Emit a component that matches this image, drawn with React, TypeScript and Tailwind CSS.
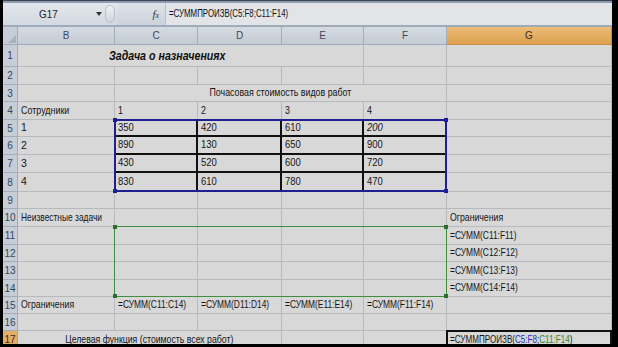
import React from 'react';

const COLS = ['B', 'C', 'D', 'E', 'F', 'G'];

// sheet rows 1..17
const DATA: Record<number, string[]> = {
  5: ['350', '420', '610', '200'],
  6: ['890', '130', '650', '900'],
  7: ['430', '520', '600', '720'],
  8: ['830', '610', '780', '470'],
};

const GRID =
  'grid grid-cols-[15px_97px_83px_84px_82px_83px_165px] grid-rows-[18px_22px_18px_17px_18px_17px_18px_18px_19px_17px_18px_18px_17px_18px_17px_17px_17px_18px]';

// Calibri is much narrower than Arial, so the text is squeezed horizontally
const T = ({
  s = 'scale-x-[0.85]',
  o = 'origin-left',
  className = '',
  children,
}: {
  s?: string;
  o?: string;
  className?: string;
  children: React.ReactNode;
}) => <span className={`inline-block whitespace-nowrap ${o} ${s} ${className}`}>{children}</span>;

const textAt = (r: number, c: number): React.ReactNode => {
  // c: 1 = B ... 6 = G
  if (r === 4) {
    const v = ['Сотрудники', '1', '2', '3', '4', ''][c - 1];
    return v ? <T>{v}</T> : '';
  }
  if (DATA[r]) {
    if (c === 1) return String(r - 4);
    if (c >= 2 && c <= 5) {
      const v = DATA[r][c - 2];
      return (
        <T s="scale-x-[0.9]" className={r === 5 && c === 5 ? 'italic' : ''}>
          {v}
        </T>
      );
    }
  }
  if (r === 10 && c === 1) return <T s="scale-x-[0.8]">Неизвестные задачи</T>;
  if (r === 10 && c === 6) return <T s="scale-x-[0.83]">Ограничения</T>;
  if (r >= 11 && r <= 14 && c === 6) return <T s="scale-x-[0.8]">{`=СУММ(C${r}:F${r})`}</T>;
  if (r === 15) {
    if (c === 1) return <T s="scale-x-[0.83]">Ограничения</T>;
    if (c >= 2 && c <= 5) {
      const l = COLS[c - 1];
      return <T s="scale-x-[0.8]">{`=СУММ(${l}11:${l}14)`}</T>;
    }
  }
  if (r === 17 && c === 6)
    return (
      <T s="scale-x-[0.77]">
        =СУММПРОИЗВ(<span className="text-[#2a2ac4]">C5:F8</span>;<span className="text-[#2f8a2f]">C11:F14</span>)
      </T>
    );
  return '';
};

const Handle = ({ pos, color }: { pos: string; color: string }) => (
  <span className={`absolute w-[4px] h-[4px] ${pos} ${color}`} />
);

export default function App() {
  const rows = Array.from({ length: 17 }, (_, i) => i + 1);

  const renderRow = (r: number) => {
    const active = r === 17;
    const out: React.ReactNode[] = [];
    out.push(
      <div
        key={`h${r}`}
        className={`flex items-center justify-center border-r border-b text-[10px] ${
          active
            ? 'bg-[#e3ae66] border-[#c99a5a] text-[#3a2c18]'
            : 'bg-[#c6cdd7] border-[#a3adba] text-[#34465a]'
        }`}
      >
        {r}
      </div>
    );

    if (r === 1) {
      out.push(
        <div key="t1" className="col-span-4 flex items-center border-r border-b border-[#b6b9be] pl-[91px]">
          <T s="scale-x-[0.82]" className="font-bold italic text-[13px] text-[#111]">
            Задача о назначениях
          </T>
        </div>
      );
      out.push(<div key="f1" className="border-r border-b border-[#b6b9be]" />);
      out.push(<div key="g1" className="border-r border-b border-[#b6b9be]" />);
      return out;
    }
    if (r === 3) {
      out.push(<div key="b3" className="border-r border-b border-[#b6b9be]" />);
      out.push(
        <div key="t3" className="col-span-4 flex items-center justify-center border-r border-b border-[#b6b9be]">
          <T s="scale-x-[0.84]" o="origin-center">
            Почасовая стоимость видов работ
          </T>
        </div>
      );
      out.push(<div key="g3" className="border-r border-b border-[#b6b9be]" />);
      return out;
    }
    if (r === 17) {
      out.push(
        <div key="t17" className="col-span-3 flex items-center justify-center border-r border-b border-[#b6b9be]">
          <T s="scale-x-[0.83]" o="origin-center">
            Целевая функция (стоимость всех работ)
          </T>
        </div>
      );
      out.push(<div key="e17" className="border-r border-b border-[#b6b9be]" />);
      out.push(<div key="f17" className="border-r border-b border-[#b6b9be]" />);
      out.push(
        <div key="g17" className="flex items-center px-[3px] whitespace-nowrap overflow-hidden">
          {textAt(17, 6)}
        </div>
      );
      return out;
    }

    for (let c = 1; c <= 6; c++) {
      const isData = DATA[r] && c >= 2 && c <= 5;
      out.push(
        <div
          key={`${r}-${c}`}
          className={`flex items-center px-[3px] whitespace-nowrap ${
            isData ? 'border-r-2 border-b-2 border-[#111]' : 'border-r border-b border-[#b6b9be]'
          }`}
        >
          {textAt(r, c)}
        </div>
      );
    }
    return out;
  };

  return (
    <div className="w-[618px] h-[347px] bg-black overflow-hidden flex flex-col pl-[3px] pr-[6px] pb-[3px] font-['Liberation_Sans',sans-serif]">
      {/* ribbon edge */}
      <div className="h-[3px] shrink-0 border-t border-[#3c4452] bg-[#8d9cae]" />

      {/* formula bar */}
      <div className="h-[22px] shrink-0 flex items-stretch bg-gradient-to-b from-[#e3e7ec] to-[#d3d9e0]">
        <div className="w-[90px] flex items-center justify-center text-[11px] text-[#222]">
          <T s="scale-x-[0.9]" o="origin-center">G17</T>
        </div>
        <div className="w-[12px] flex items-center justify-center">
          <svg width="6" height="4" viewBox="0 0 6 4">
            <path d="M0 0h6L3 4z" fill="#333" />
          </svg>
        </div>
        <div className="w-[12px] flex items-center">
          <div className="w-[10px] h-[18px] rounded-full border border-[#b7c0cb] bg-gradient-to-b from-[#eef1f5] to-[#cdd4dd]" />
        </div>
        <div className="w-[48px] flex items-center justify-end pr-[6px] bg-gradient-to-b from-[#dfe3e9] to-[#cbd2db]">
          <span className="font-['Liberation_Serif',serif] italic text-[11px] text-[#333]">
            f<span className="text-[8px]">x</span>
          </span>
        </div>
        <div className="flex-1 flex items-center pl-[3px] bg-[#e2e4e7] text-[10.5px] text-[#111] border-l border-[#b9c1cc]">
          <T s="scale-x-[0.75]">=СУММПРОИЗВ(C5:F8;C11:F14)</T>
        </div>
      </div>
      <div className="h-[2px] shrink-0 bg-[#9eabbb]" />

      {/* sheet */}
      <div className="flex-1 overflow-hidden bg-[#d8d8d8]">
        <div className="relative text-[10.5px] text-[#151515]">
          <div className={GRID}>
            {/* column headers */}
            <div className="relative bg-[#c6cdd7] border-r border-b border-[#a3adba]">
              <svg className="absolute right-[1px] bottom-[1px]" width="8" height="8" viewBox="0 0 8 8">
                <path d="M8 0V8H0z" fill="#a9b3bf" />
              </svg>
            </div>
            {COLS.map((l) => (
              <div
                key={l}
                className={`flex items-center justify-center border-r border-b text-[10px] ${
                  l === 'G'
                    ? 'bg-gradient-to-b from-[#ecbd78] to-[#dca04f] border-[#c88f45] text-[#3a2a14]'
                    : 'bg-gradient-to-b from-[#d6dbe2] to-[#c4cbd4] border-[#a3adba] text-[#3e4a58]'
                }`}
              >
                {l}
              </div>
            ))}

            {rows.map((r) => renderRow(r))}
          </div>

          {/* range highlights drawn over the cells */}
          <div className={`absolute inset-0 pointer-events-none ${GRID}`}>
            {/* reference range C5:F8 */}
            <div className="col-start-3 col-span-4 row-start-6 row-span-4 relative -ml-px -mt-px border-2 border-[#1f1f92]">
              <Handle pos="-left-[3px] -top-[3px]" color="bg-[#1f1f92]" />
              <Handle pos="-right-[3px] -top-[3px]" color="bg-[#1f1f92]" />
              <Handle pos="-left-[3px] -bottom-[3px]" color="bg-[#1f1f92]" />
              <Handle pos="-right-[3px] -bottom-[3px]" color="bg-[#1f1f92]" />
            </div>

            {/* reference range C11:F14 */}
            <div className="col-start-3 col-span-4 row-start-12 row-span-4 relative -ml-px -mt-px border border-[#3f8d3f]">
              <Handle pos="-left-[2px] -top-[2px]" color="bg-[#2c6e2c]" />
              <Handle pos="-right-[2px] -top-[2px]" color="bg-[#2c6e2c]" />
              <Handle pos="-left-[2px] -bottom-[2px]" color="bg-[#2c6e2c]" />
              <Handle pos="-right-[2px] -bottom-[2px]" color="bg-[#2c6e2c]" />
            </div>

            {/* active cell G17 */}
            <div className="col-start-7 row-start-18 -ml-px -mt-px border-2 border-[#111]" />
          </div>
        </div>
      </div>
    </div>
  );
}
